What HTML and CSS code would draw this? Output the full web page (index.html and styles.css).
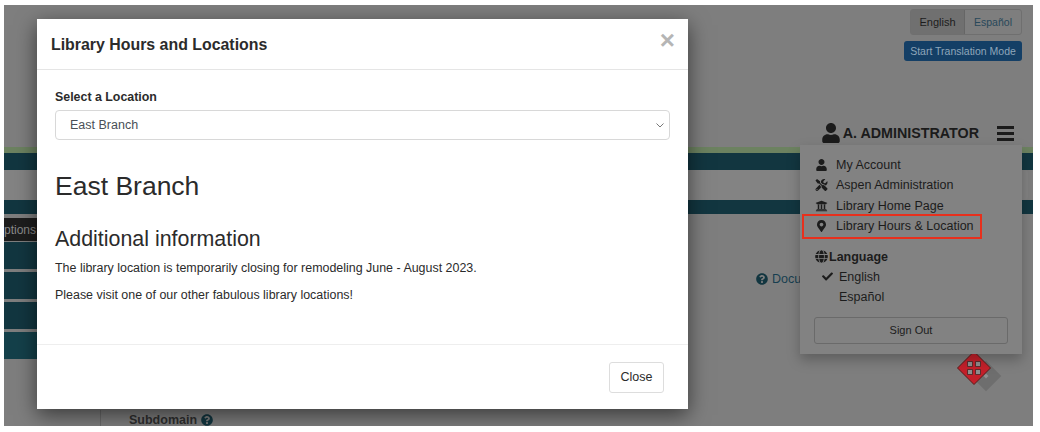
FILE: index.html
```html
<!DOCTYPE html>
<html lang="en">
<head>
  <meta charset="UTF-8">
  <title>Library Hours and Locations</title>
  <link rel="stylesheet" href="styles.css">
</head>
<body>

<svg class="sprite" xmlns="http://www.w3.org/2000/svg">
  <symbol id="i-user" viewBox="0 0 448 512"><path d="M224 256c70.700 0 128-57.300 128-128S294.700 0 224 0 96 57.300 96 128s57.300 128 128 128zm89.600 32h-16.700c-22.200 10.200-46.900 16-72.900 16s-50.600-5.800-72.900-16h-16.700C60.200 288 0 348.200 0 422.400V464c0 26.500 21.500 48 48 48h352c26.500 0 48-21.500 48-48v-41.600c0-74.200-60.200-134.400-134.400-134.400z"/></symbol>
  <symbol id="i-tools" viewBox="0 0 512 512"><path d="M501.100 395.700L384 278.600c-23.100-23.100-57.600-27.600-85.400-13.900L192 158.100V96L64 0 0 64l96 128h62.100l106.600 106.600c-13.600 27.800-9.200 62.300 13.900 85.400l117.100 117.100c14.600 14.600 38.200 14.600 52.700 0l52.700-52.700c14.500-14.600 14.500-38.200 0-52.700zM331.700 225c28.300 0 54.900 11 74.900 31l19.400 19.400c15.800-6.900 30.800-16.500 43.800-29.500 37.100-37.100 49.700-89.300 37.900-136.700-2.200-9-13.500-12.100-20.100-5.500l-74.400 74.400-67.900-11.300L334 98.900l74.400-74.400c6.600-6.600 3.400-17.900-5.700-20.200-47.400-11.700-99.600.9-136.600 37.900-28.500 28.500-41.900 66.100-41.200 103.600l82.100 82.100c8.100-1.900 16.500-2.900 24.700-2.900zm-103.900 82l-56.700-56.700L18.700 402.800c-25 25-25 65.500 0 90.500s65.500 25 90.500 0l123.600-123.600c-7.600-19.900-9.900-41.600-5-62.700zM64 472c-13.200 0-24-10.800-24-24 0-13.300 10.700-24 24-24s24 10.700 24 24c0 13.200-10.700 24-24 24z"/></symbol>
  <symbol id="i-bank" viewBox="0 0 512 512"><path d="M496 128v16a8 8 0 0 1-8 8h-24v12c0 6.627-5.373 12-12 12H60c-6.627 0-12-5.373-12-12v-12H24a8 8 0 0 1-8-8v-16a8 8 0 0 1 4.941-7.392l232-88a7.996 7.996 0 0 1 6.118 0l232 88A8 8 0 0 1 496 128zm-24 304H40c-13.255 0-24 10.745-24 24v16a8 8 0 0 0 8 8h464a8 8 0 0 0 8-8v-16c0-13.255-10.745-24-24-24zM96 192v192H60c-6.627 0-12 5.373-12 12v20h416v-20c0-6.627-5.373-12-12-12h-36V192h-64v192h-64V192h-64v192h-64V192H96z"/></symbol>
  <symbol id="i-marker" viewBox="0 0 384 512"><path d="M172.268 501.670C26.970 291.031 0 269.413 0 192 0 85.961 85.961 0 192 0s192 85.961 192 192c0 77.413-26.970 99.031-172.268 309.670-9.535 13.774-29.930 13.773-39.464 0zM192 272c44.183 0 80-35.817 80-80s-35.817-80-80-80-80 35.817-80 80 35.817 80 80 80z"/></symbol>
  <symbol id="i-check" viewBox="0 0 512 512"><path d="M173.898 439.404l-166.400-166.400c-9.997-9.997-9.997-26.206 0-36.204l36.203-36.204c9.997-9.998 26.207-9.998 36.204 0L192 312.690 432.095 72.596c9.997-9.997 26.207-9.997 36.204 0l36.203 36.204c9.997 9.997 9.997 26.206 0 36.204l-294.400 294.401c-9.998 9.997-26.207 9.997-36.204-.001z"/></symbol>
  <symbol id="i-help" viewBox="0 0 512 512"><path d="M504 256c0 136.997-111.043 248-248 248S8 392.997 8 256C8 119.083 119.043 8 256 8s248 111.083 248 248zM262.655 90c-54.497 0-89.255 22.957-116.549 63.758-3.536 5.286-2.353 12.415 2.715 16.258l34.699 26.310c5.205 3.947 12.621 3.008 16.665-2.122 17.864-22.658 30.113-35.797 57.303-35.797 20.429 0 45.698 13.148 45.698 32.958 0 14.976-12.363 22.667-32.534 33.976C247.128 238.528 216 254.941 216 296v4c0 6.627 5.373 12 12 12h56c6.627 0 12-5.373 12-12v-1.333c0-28.462 83.186-29.647 83.186-106.667 0-58.002-60.165-102-116.531-102zM256 338c-25.365 0-46 20.635-46 46 0 25.364 20.635 46 46 46s46-20.636 46-46c0-25.365-20.635-46-46-46z"/></symbol>
  <symbol id="i-globe" viewBox="0 0 496 512"><path d="M336.500 160C322 70.700 287.800 8 248 8s-74 62.700-88.500 152h177zM152 256c0 22.200 1.200 43.500 3.300 64h185.300c2.100-20.500 3.300-41.800 3.300-64s-1.200-43.500-3.300-64H155.300c-2.100 20.500-3.300 41.800-3.300 64zm324.700-96c-28.600-67.900-86.500-120.400-158-141.600 24.400 33.800 41.200 84.700 50 141.600h108zM177.200 18.400C105.800 39.600 47.800 92.100 19.300 160h108c8.700-56.900 25.500-107.800 49.900-141.600zM487.400 192H372.700c2.100 21 3.300 42.500 3.300 64s-1.200 43-3.300 64h114.600c5.500-20.500 8.600-41.800 8.600-64s-3.100-43.500-8.500-64zM120 256c0-21.500 1.200-43 3.300-64H8.600C3.200 212.500 0 233.800 0 256s3.200 43.500 8.600 64h114.600c-2-21-3.200-42.500-3.200-64zm39.500 96c14.500 89.300 48.700 152 88.500 152s74-62.700 88.500-152h-177zm159.300 141.600c71.400-21.200 129.400-73.700 158-141.600h-108c-8.800 56.900-25.600 107.800-50 141.600zM19.300 352c28.600 67.900 86.500 120.400 158 141.600-24.400-33.800-41.200-84.700-50-141.600h-108z"/></symbol>
</svg>

<div id="stage">
  <div class="page">
    <div class="lang-row">
      <div class="lang-group">
        <span class="lang-btn active">English</span>
        <span class="lang-btn">Español</span>
      </div>
    </div>
    <div class="translate-row"><span class="translate-btn">Start Translation Mode</span></div>
    <div class="user-row">
      <svg class="user-icon"><use href="#i-user"/></svg>
      <span class="user-name">A. ADMINISTRATOR</span>
      <span class="burger"><i></i><i></i><i></i></span>
    </div>
    <div class="green-line"></div>
    <div class="teal-bar"></div>
    <div class="search-row"><div class="search-box"></div></div>
    <div class="teal-bar thin"></div>
    <div class="content">
      <div class="side">
        <div class="options-btn"><span>Options</span></div>
        <div class="side-item"></div>
        <div class="side-item"></div>
        <div class="side-item"></div>
        <div class="side-item light"></div>
      </div>
      <div class="doc-link">
        <svg class="doc-icon"><use href="#i-help"/></svg>
        <span>Documentation</span>
      </div>
    </div>
    <div class="form-row">
      <div class="form-label">Subdomain <svg class="doc-icon small"><use href="#i-help"/></svg></div>
    </div>
  </div>

  <div class="fab">
    <div class="fab-shadow"></div>
    <svg class="fab-red" viewBox="0 0 34 34">
      <path d="M17 .5 33.500 17 17 33.500 .5 17z" fill="#c4202a" stroke="#5a1a1a"/>
      <path d="M10.500 10.500h5v5h-5zM18.500 10.500h5v5h-5zM10.500 18.500h5v5h-5zM18.500 18.500h5v5h-5z" fill="#8f8f8f" stroke="#4a2222" stroke-width=".8"/>
    </svg>
  </div>

  <div class="menu">
    <a class="menu-item"><svg class="menu-icon"><use href="#i-user"/></svg>My Account</a>
    <a class="menu-item"><svg class="menu-icon"><use href="#i-tools"/></svg>Aspen Administration</a>
    <a class="menu-item"><svg class="menu-icon"><use href="#i-bank"/></svg>Library Home Page</a>
    <a class="menu-item marked"><svg class="menu-icon"><use href="#i-marker"/></svg>Library Hours &amp; Location</a>
    <div class="menu-heading"><svg class="globe"><use href="#i-globe"/></svg>Language</div>
    <a class="menu-lang"><svg class="check"><use href="#i-check"/></svg>English</a>
    <a class="menu-lang"><span class="check"></span>Español</a>
    <div class="signout">Sign Out</div>
  </div>

  <div class="modal">
    <div class="modal-header">
      <div class="modal-title">Library Hours and Locations</div>
      <span class="modal-x">×</span>
    </div>
    <div class="modal-body">
      <div class="field-label">Select a Location</div>
      <div class="select">
        <span>East Branch</span>
        <svg class="chevron" viewBox="0 0 8 5"><path d="M.5.5 4 4 7.500.5" fill="none" stroke="#555" stroke-width=".8"/></svg>
      </div>
      <h2>East Branch</h2>
      <h3>Additional information</h3>
      <p>The library location is temporarily closing for remodeling June - August 2023.</p>
      <p>Please visit one of our other fabulous library locations!</p>
    </div>
    <div class="modal-footer">
      <span class="close-btn">Close</span>
    </div>
  </div>
</div>

</body>
</html>
```

FILE: styles.css
```css
body {
  margin: 0;
  background-color: #fff;
  font-family: "Liberation Sans", Arial, sans-serif;
}

.sprite {
  display: none;
}

svg {
  fill: currentColor;
}

#stage {
  position: relative;
  width: 1029px;
  height: 421px;
  margin: 5px 0 0 4px;
  background-color: #7e7e7e;
  overflow: hidden;
}

/* page behind the backdrop */
.page {
  display: flex;
  flex-direction: column;
}

.lang-row {
  display: flex;
  justify-content: flex-end;
  padding: 4px 11px 0 0;
}

.lang-group {
  display: flex;
  height: 26px;
  border: 1px solid #6f6f6f;
  border-radius: 3px;
  box-sizing: border-box;
}

.lang-btn {
  display: flex;
  align-items: center;
  justify-content: center;
  width: 56px;
  font-size: 10.500px;
  color: #28485a;
}

.lang-btn.active {
  width: 53px;
  background-color: #707070;
  border-right: 1px solid #666;
  font-size: 11px;
  color: #1c1c1c;
}

.translate-row {
  display: flex;
  justify-content: flex-end;
  padding: 6px 11px 0 0;
}

.translate-btn {
  display: flex;
  align-items: center;
  justify-content: center;
  width: 118px;
  height: 20px;
  background-color: #143f66;
  border-radius: 3px;
  font-size: 10.500px;
  color: #8fa6ba;
}

.user-row {
  display: flex;
  align-items: center;
  justify-content: flex-end;
  height: 22px;
  margin-top: 61px;
  padding-right: 19px;
  color: #1b1b1b;
}

.user-icon {
  width: 18px;
  height: 20px;
  margin-right: 3px;
}

.user-name {
  font-size: 14.300px;
  font-weight: bold;
}

.burger {
  display: flex;
  flex-direction: column;
  justify-content: space-between;
  width: 17px;
  height: 15px;
  margin-left: 18px;
}

.burger i {
  height: 3px;
  background-color: #1b1b1b;
}

.green-line {
  height: 6px;
  margin-top: 3px;
  background-color: #6c8260;
}

.teal-bar {
  height: 17px;
  background-color: #123640;
}

.teal-bar.thin {
  height: 14px;
}

.search-row {
  display: flex;
  height: 30px;
}

.search-box {
  flex: 1;
  margin-right: 5px;
  background-color: #838383;
  border-radius: 0 3px 3px 0;
}

.content {
  display: flex;
  height: 196px;
}

.side {
  display: flex;
  flex-direction: column;
  width: 33px;
  padding-top: 4px;
}

.options-btn {
  display: flex;
  justify-content: flex-end;
  align-items: center;
  height: 23px;
  margin-bottom: 1px;
  background-color: #1d1d1d;
  overflow: hidden;
  font-size: 12px;
  color: #8a8a8a;
}

.options-btn span {
  padding-right: 1px;
}

.side-item {
  height: 27px;
  margin-bottom: 3px;
  background-color: #123640;
}

.side-item.light {
  background-color: #14404a;
}

.doc-link {
  display: flex;
  align-items: center;
  gap: 4px;
  height: 16px;
  margin: 57px 0 0 719px;
  font-size: 12.500px;
  color: #173f50;
  white-space: nowrap;
}

.doc-icon {
  width: 12px;
  height: 12px;
  color: #123640;
}

.form-row {
  margin-left: 96px;
  padding: 3px 0 0 28px;
  border-left: 1px solid #6a6a6a;
}

.form-label {
  font-size: 12.500px;
  font-weight: bold;
  color: #2f2f2f;
}

.doc-icon.small {
  vertical-align: -2px;
}

/* red move handle under the menu */
.fab {
  position: absolute;
  top: 346px;
  left: 953px;
  width: 46px;
  height: 46px;
}

.fab-red {
  position: absolute;
  top: 0;
  left: 0;
  width: 34px;
  height: 34px;
}

.fab-shadow {
  position: absolute;
  top: 13px;
  left: 17px;
  width: 24px;
  height: 24px;
  background-color: #6e6e6e;
  transform: rotate(45deg) scale(.9);
}

.fab-shadow::after {
  content: "";
  position: absolute;
  top: 10px;
  left: 10px;
  width: 4px;
  height: 4px;
  background-color: #8f8f8f;
}

/* account dropdown */
.menu {
  position: absolute;
  top: 140px;
  left: 796px;
  width: 222px;
  height: 209px;
  box-sizing: border-box;
  padding: 10px 14px 0 15px;
  background-color: #828282;
  box-shadow: 0 6px 12px rgba(0, 0, 0, .25);
  font-size: 12.500px;
  color: #1c1c1c;
}

.menu-item {
  display: flex;
  align-items: center;
  height: 20.300px;
}

.menu-icon {
  flex: none;
  width: 13px;
  height: 12px;
  margin-right: 8px;
}

.menu-item.marked {
  position: relative;
}

.menu-item.marked::after {
  content: "";
  position: absolute;
  top: -2px;
  left: -13px;
  width: 180px;
  height: 25px;
  box-sizing: border-box;
  border: 2px solid #e8301c;
}

.menu-heading {
  display: flex;
  align-items: center;
  height: 20px;
  margin-top: 10.800px;
  font-weight: bold;
}

.globe {
  width: 13px;
  height: 13px;
  margin-right: 1px;
}

.menu-lang {
  display: flex;
  align-items: center;
  height: 20px;
}

.check {
  width: 11px;
  height: 11px;
  margin: 0 6px 0 7px;
}

.signout {
  display: flex;
  align-items: center;
  justify-content: center;
  height: 27px;
  margin: 10px 0 0 -1px;
  border: 1px solid #6a6a6a;
  border-radius: 3px;
  box-sizing: border-box;
  font-size: 11px;
}

/* modal */
.modal {
  position: absolute;
  top: 14px;
  left: 33px;
  display: flex;
  flex-direction: column;
  width: 651px;
  height: 390px;
  background-color: #fff;
  box-shadow: 0 6px 20px rgba(0, 0, 0, .55);
  color: #2b2b2b;
}

.modal-header {
  display: flex;
  justify-content: space-between;
  align-items: center;
  height: 50px;
  padding: 0 13px 0 14px;
  border-bottom: 1px solid #e5e5e5;
}

.modal-title {
  margin-top: 1px;
  font-size: 15.900px;
  font-weight: bold;
}

.modal-x {
  margin-top: -8px;
  font-size: 26px;
  font-weight: bold;
  color: #b5b5b5;
}

.modal-body {
  flex: 1;
  padding: 20px 18px 0 18px;
}

.field-label {
  font-size: 12.400px;
  font-weight: bold;
  line-height: 14px;
}

.select {
  display: flex;
  justify-content: space-between;
  align-items: center;
  height: 30px;
  margin-top: 6px;
  padding: 0 5px 0 14px;
  box-sizing: border-box;
  border: 1px solid #d8d8d8;
  border-radius: 4px;
  font-size: 12.500px;
  color: #495057;
}

.select span {
  margin-top: -1px;
}

.chevron {
  width: 8px;
  height: 5px;
}

h2 {
  margin: 31px 0 0 0;
  font-size: 26.500px;
  font-weight: normal;
  line-height: 30px;
}

h3 {
  margin: 25px 0 0 0;
  font-size: 21.400px;
  font-weight: normal;
  line-height: 26px;
}

p {
  margin: 9px 0 0 0;
  font-size: 12.440px;
  line-height: 14px;
}

p + p {
  margin-top: 13px;
}

.modal-footer {
  display: flex;
  justify-content: flex-end;
  align-items: center;
  height: 65px;
  padding-right: 24px;
  box-sizing: border-box;
  border-top: 1px solid #eee;
}

.close-btn {
  display: flex;
  align-items: center;
  justify-content: center;
  width: 55px;
  height: 31px;
  box-sizing: border-box;
  border: 1px solid #ddd;
  border-radius: 3px;
  font-size: 12.500px;
}
```
